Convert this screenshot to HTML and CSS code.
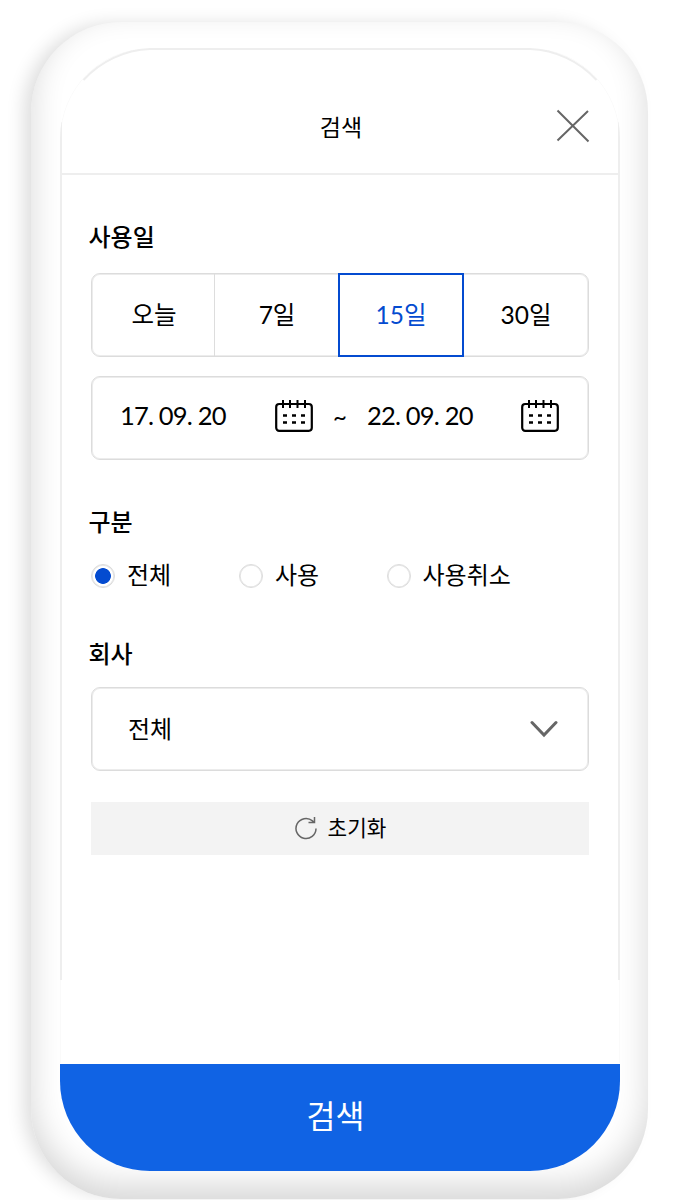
FILE: index.html
```html
<!DOCTYPE html>
<html lang="ko">
<head>
<meta charset="utf-8">
<title>검색</title>
<link rel="stylesheet" href="styles.css">
</head>
<body>
<div class="phone">
  <div class="screen">
    <svg class="outline" viewBox="0 0 560 1123" fill="none">
      <path d="M.5 1015V90A89.500 89.500 0 0 1 90 .5H470A89.500 89.500 0 0 1 559.500 90V1015" stroke="#fafafa"/>
      <path d="M23.500 32A95 95 0 0 1 90 1H470A95 95 0 0 1 536.500 32" stroke="#eee" stroke-width="2"/>
      <path d="M1 74V932M559 74V932" stroke="#eee" stroke-width="2"/>
    </svg>
    <header class="header">
      <h1 class="title">검색</h1>
      <svg class="close" width="34" height="34" viewBox="0 0 34 34"><path d="M1.500 1.500L32.500 32.500M32 2L1.500 31.500" stroke="#666" stroke-width="2" fill="none"/></svg>
    </header>
    <main class="content">
      <h2 class="label">사용일</h2>
      <div class="segments">
        <div class="segment">오늘</div>
        <div class="segment">7일</div>
        <div class="segment active">15일</div>
        <div class="segment">30일</div>
      </div>
      <div class="dates">
        <span class="date">17. 09. 20</span>
        <svg class="calendar" width="38" height="32" viewBox="0 0 38 32"><rect x="1.200" y="4" width="35.600" height="26.800" rx="3" fill="none" stroke="#000" stroke-width="2.200"/><path d="M8 0V8M15 0V8M22.500 0V8M30 0V8" stroke="#000" stroke-width="2"/><path d="M8 15.500H30M8 22.500H30" stroke="#000" stroke-width="2.600" stroke-dasharray="4 5"/></svg>
        <span class="tilde">~</span>
        <span class="date">22. 09. 20</span>
        <svg class="calendar" width="38" height="32" viewBox="0 0 38 32"><rect x="1.200" y="4" width="35.600" height="26.800" rx="3" fill="none" stroke="#000" stroke-width="2.200"/><path d="M8 0V8M15 0V8M22.500 0V8M30 0V8" stroke="#000" stroke-width="2"/><path d="M8 15.500H30M8 22.500H30" stroke="#000" stroke-width="2.600" stroke-dasharray="4 5"/></svg>
      </div>
      <h2 class="label kind">구분</h2>
      <div class="radios">
        <div class="radio"><i class="dot on"></i><span>전체</span></div>
        <div class="radio"><i class="dot"></i><span>사용</span></div>
        <div class="radio"><i class="dot"></i><span>사용취소</span></div>
      </div>
      <h2 class="label company">회사</h2>
      <div class="select">
        <span>전체</span>
        <svg width="28" height="18" viewBox="0 0 28 18"><path d="M2 2.500L14 15L26 2.500" fill="none" stroke="#666" stroke-width="3" stroke-linecap="round"/></svg>
      </div>
      <div class="reset">
        <svg width="24" height="24" viewBox="0 0 24 24" fill="none" stroke="#666" stroke-width="1.500"><path d="M22 12.500A10 10 0 1 1 18.500 4.900L20 6.500M20.500 1V6.500H14.500"/></svg>
        <span>초기화</span>
      </div>
    </main>
    <div class="submit">검색</div>
  </div>
</div>
</body>
</html>
```
FILE: styles.css
```css
* { box-sizing: border-box; }
body {
  margin: 0;
  height: 1200px;
  padding: 22px 30px 2px 31px;
  background: #fff;
  overflow: hidden;
  color: #000;
  font: 24px/36px Lato, "Noto Sans CJK KR", sans-serif;
}
.phone {
  width: 617px;
  height: 1177px;
  padding: 26px 28px 28px 29px;
  border-radius: 90px;
  background: #fff;
  box-shadow: -10px -1px 18px -3px #dedede, inset 0 -14px 32px #d7d7d7;
}
.screen {
  position: relative;
  display: flex;
  flex-direction: column;
  height: 1123px;
  border-radius: 90px;
  background: #fff;
  overflow: hidden;
}
.outline { position: absolute; inset: 0; width: 560px; height: 1123px; }
.header {
  display: grid;
  grid-template-columns: 1fr auto 1fr;
  align-items: center;
  height: 127px;
  padding: 31px 30px 0 32px;
  border-bottom: 2px solid #eee;
}
.title { grid-column: 2; margin: 0; padding-top: 2px; font-size: 23px; font-weight: 400; }
.close { justify-self: end; }
.content { flex: 1; padding: 44px 31px 0; }
.label { margin: 0 0 18px -2.500px; font-size: 24px; line-height: 36px; font-weight: 500; }
.segments, .dates, .select {
  height: 84px;
  border: 1px solid #dcdcdc;
  border-radius: 9px;
  box-shadow: inset 0 0 0 1px #ececec;
}
.segments { display: grid; grid-template-columns: 123px 123px 126px 124px; }
.segment { display: flex; align-items: center; justify-content: center; font-size: 24.500px; }
.segment:first-child { border-right: 1px solid #ddd; padding-left: 2px; }
.segment.active { margin: -1px 0; border: 2px solid #044bd0; color: #044bd0; }
.segment:nth-child(2) { padding-left: 1px; }
.dates {
  display: grid;
  grid-template-columns: 155px 38px 54px 154px 38px;
  align-items: center;
  margin-top: 19px;
  padding: 0 0 4px 28px;
  font-size: 25.500px;
}
.date { padding-bottom: 2px; letter-spacing: -0.82px; }
.tilde { text-align: center; font-size: 24px; }
.kind { margin-top: 44px; }
.radios { display: grid; grid-template-columns: 148px 147.500px 1fr; height: 36px; }
.radio { display: flex; align-items: center; gap: 12px; height: 36px; }
.radio span { padding-bottom: 2px; }
.dot { width: 24px; height: 24px; border: 1px solid #dcdcdc; border-radius: 50%; box-shadow: inset 0 0 0 0.7px #e4e4e4; }
.dot.on { background: radial-gradient(circle, #044bd0 7.500px, #fff 8.200px); }
.company { margin: 42px 0 15px -2.500px; }
.select { display: flex; align-items: center; justify-content: space-between; padding: 0 30px 0 36px; }
.reset {
  display: flex;
  align-items: center;
  justify-content: center;
  gap: 10px;
  height: 53px;
  margin-top: 31px;
  padding: 0 0 2px 0;
  background: #f3f3f3;
  font-size: 21.300px;
}
.submit {
  display: flex;
  align-items: center;
  justify-content: center;
  height: 107px;
  padding: 0 9px 3px 0;
  background: #1063e4;
  color: #fff;
  font-size: 31.500px;
}
```
